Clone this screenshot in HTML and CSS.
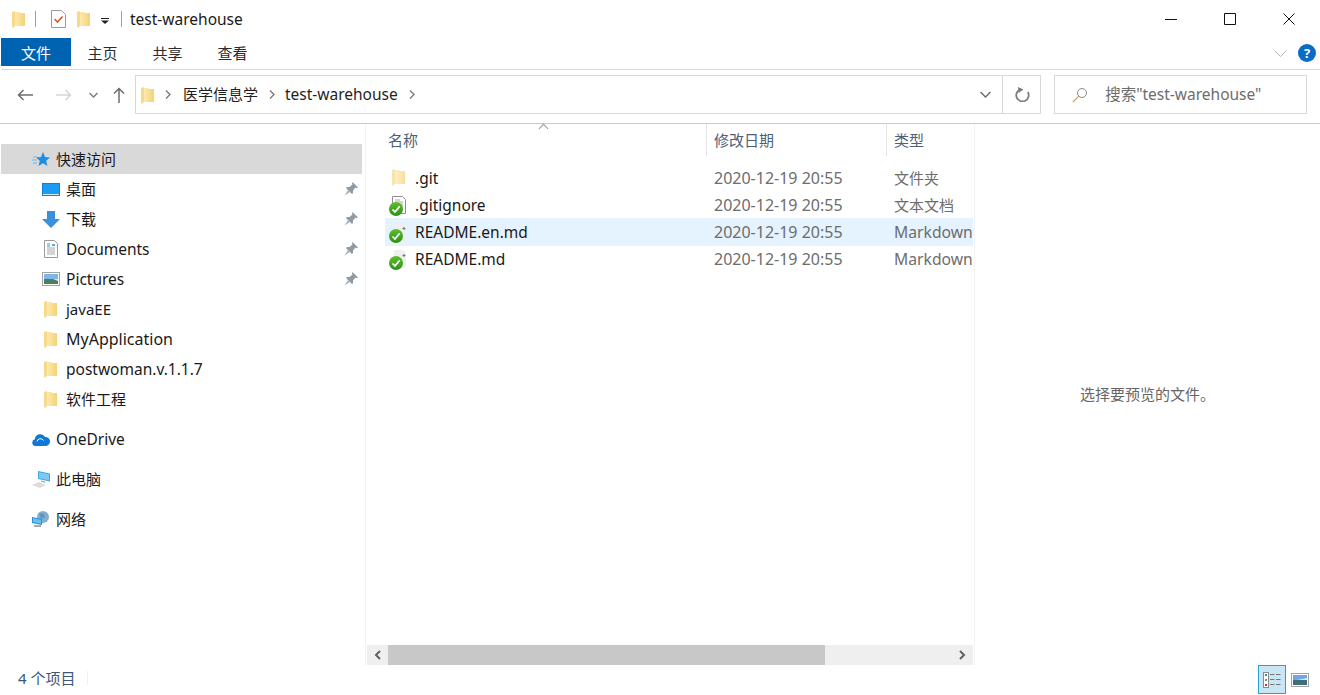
FILE: index.html
```html
<!DOCTYPE html>
<html lang="zh-CN">
  <head>
    <meta charset="UTF-8" />
    <title>test-warehouse</title>
    <link rel="stylesheet" href="styles.css">
  </head>
  <body>
    <svg class="sprites" width="0" height="0">
      <defs>
        <linearGradient id="folderBody" x1="0" y1="0" x2="1" y2="0">
          <stop offset="0" stop-color="#fdeab0" />
          <stop offset="1" stop-color="#f5d273" />
        </linearGradient>
        <linearGradient id="okFill" x1="0" y1="0" x2="0" y2="1">
          <stop offset="0" stop-color="#5cc02c" />
          <stop offset="1" stop-color="#2f8f18" />
        </linearGradient>
        <symbol id="folder" viewBox="0 0 13 17">
          <path d="M3 1h4l1 1h5v13H3z" fill="url(#folderBody)" />
          <path d="M0 1l3-1v15l-1 .5V17l-2-1z" fill="#f6d98c" />
        </symbol>
        <symbol id="pin" viewBox="0 0 14 14">
          <path d="M8.500 0L14 5.500l-1.500.7-1-.7L9 8.500V11l-1 1-6-6 1-1h2.500l3-2.500-.5-1z" fill="#8f9aa3" />
          <path d="M4 8L.5 13.500 6 10z" fill="#a9b2b9" />
        </symbol>
        <symbol id="okbadge" viewBox="0 0 14 14">
          <circle cx="7" cy="7" r="7" fill="url(#okFill)" />
          <path d="M3.500 7.500l2.500 2.500 4.700-5.800" fill="none" stroke="#fff" stroke-width="1.700" />
        </symbol>
        <symbol id="mdpage" viewBox="0 0 14 18">
          <path d="M2 0h9l3 3v15H2z" fill="#efefef" />
          <path d="M10.500 5.500h3M12 4v3" stroke="#777" />
        </symbol>
      </defs>
    </svg>

    <div class="window">
      <header class="titlebar">
        <svg class="ic-folder" width="13" height="17"><use href="#folder" /></svg>
        <span class="qa-sep"></span>
        <svg class="ic-props" width="15" height="18" viewBox="0 0 15 18">
          <path d="M.5.5h10l4 4v13H.5z" fill="#fff" stroke="#9a9a9a" />
          <path d="M3.500 9l3 3 5-5.500" fill="none" stroke="#e8541e" stroke-width="1.600" />
        </svg>
        <svg class="ic-folder-2" width="13" height="17"><use href="#folder" /></svg>
        <svg class="ic-qa-menu" width="8" height="6" viewBox="0 0 8 6">
          <path d="M0 0h8v1H0z" fill="#222" />
          <path d="M0 2.500h8L4 6z" fill="#222" />
        </svg>
        <span class="qa-sep qa-sep-2"></span>
        <span class="title-text">test-warehouse</span>
        <div class="win-controls">
          <svg width="12" height="12" viewBox="0 0 12 12"><path d="M0 6.500h12" stroke="#111" /></svg>
          <svg width="12" height="12" viewBox="0 0 12 12"><path d="M.5.500h11v11H.5z" fill="none" stroke="#111" /></svg>
          <svg width="12" height="12" viewBox="0 0 12 12"><path d="M.5.500l11 11M11.500.500l-11 11" stroke="#111" /></svg>
        </div>
      </header>

      <nav class="ribbon">
        <a class="tab tab-file">文件</a>
        <a class="tab">主页</a>
        <a class="tab">共享</a>
        <a class="tab">查看</a>
        <svg class="ribbon-toggle" width="13" height="7" viewBox="0 0 13 7">
          <path d="M.5.500l6 6 6-6" fill="none" stroke="#b4b4b4" />
        </svg>
        <span class="help">?</span>
      </nav>

      <div class="navbar">
        <div class="nav-buttons">
          <svg class="nav-back" width="16" height="12" viewBox="0 0 16 12"><path d="M16 6H1.500M6.500 1l-5 5 5 5" fill="none" stroke="#6d6d6d" stroke-width="1.500" /></svg>
          <svg class="nav-forward" width="16" height="12" viewBox="0 0 16 12"><path d="M0 6h14.500M9.500 1l5 5-5 5" fill="none" stroke="#d6d6d6" stroke-width="1.500" /></svg>
          <svg class="nav-recent" width="9" height="6" viewBox="0 0 9 6"><path d="M.5 1l4 4 4-4" fill="none" stroke="#7f7f7f" stroke-width="1.500" /></svg>
          <svg class="nav-up" width="12" height="16" viewBox="0 0 12 16"><path d="M6 16V1.500M1 6.500l5-5 5 5" fill="none" stroke="#6d6d6d" stroke-width="1.500" /></svg>
        </div>
        <div class="address">
          <svg class="addr-folder" width="13" height="17"><use href="#folder" /></svg>
          <svg class="crumb-arrow" width="6" height="9" viewBox="0 0 6 9"><path d="M1 .5l4 4-4 4" fill="none" stroke="#777" stroke-width="1.300" /></svg>
          <span class="crumb">医学信息学</span>
          <svg class="crumb-arrow" width="6" height="9" viewBox="0 0 6 9"><path d="M1 .5l4 4-4 4" fill="none" stroke="#777" stroke-width="1.300" /></svg>
          <span class="crumb crumb-latin">test-warehouse</span>
          <svg class="crumb-arrow" width="6" height="9" viewBox="0 0 6 9"><path d="M1 .5l4 4-4 4" fill="none" stroke="#777" stroke-width="1.300" /></svg>
          <svg class="addr-drop" width="11" height="7" viewBox="0 0 11 7"><path d="M.5 1l5 5 5-5" fill="none" stroke="#6d6d6d" stroke-width="1.500" /></svg>
          <div class="addr-refresh">
            <svg width="15" height="15" viewBox="0 0 15 15">
              <path d="M12.800 5A6.200 6.200 0 1 1 5.500 2.300" fill="none" stroke="#7d7d7d" stroke-width="1.800" />
              <path d="M3 0l5.500 2.500L3.500 6z" fill="#7d7d7d" />
            </svg>
          </div>
        </div>
        <div class="search">
          <svg width="16" height="16" viewBox="0 0 16 16">
            <circle cx="10" cy="6" r="4.500" fill="none" stroke="#8a8a8a" />
            <path d="M6.800 9.200L.8 15.200" stroke="#c49a5c" stroke-width="1.200" />
          </svg>
          <span class="search-text">搜索"test-warehouse"</span>
        </div>
      </div>

      <main class="content">
        <aside class="sidebar">
          <div class="side-row top selected">
            <svg width="18" height="15" viewBox="0 0 18 15">
              <path d="M11 0l2 5 5 .4-3.800 3.300L15.400 14 11 11.200 6.500 14l1.300-5.300L4 5.400 9 5z" fill="#1f8fe6" />
              <path d="M1 5h4M0 8h5M1 11h4" stroke="#6fb6ea" />
            </svg>
            <span>快速访问</span>
          </div>
          <div class="side-row">
            <svg width="18" height="13" viewBox="0 0 18 13">
              <rect width="18" height="13" fill="#0f7fd6" />
              <rect x="1" y="1" width="16" height="10" fill="#1a9cf5" />
              <path d="M1 11h16v1H1z" fill="#d5ecfb" />
            </svg>
            <span>桌面</span>
            <svg class="pin" width="14" height="14"><use href="#pin" /></svg>
          </div>
          <div class="side-row">
            <svg width="18" height="17" viewBox="0 0 18 17"><path d="M5 0h8v8h5l-9 9-9-9h5z" fill="#3b8fdc" /></svg>
            <span>下载</span>
            <svg class="pin" width="14" height="14"><use href="#pin" /></svg>
          </div>
          <div class="side-row">
            <svg width="18" height="18" viewBox="0 0 18 18">
              <path d="M2.500.5h10l3 3v14h-13z" fill="#fff" stroke="#9a9a9a" />
              <path d="M5 4h3M5 6h3" stroke="#3a97d8" />
              <path d="M5 8h8M5 10h8M5 12h8M5 14h8" stroke="#a9a9a9" />
              <path d="M10 4h3v2h-3z" fill="#6aa8d8" />
            </svg>
            <span class="latin">Documents</span>
            <svg class="pin" width="14" height="14"><use href="#pin" /></svg>
          </div>
          <div class="side-row">
            <svg width="18" height="14" viewBox="0 0 18 14">
              <rect x=".5" y=".5" width="17" height="13" fill="#fff" stroke="#a3a3a3" />
              <rect x="2" y="2" width="14" height="5" fill="#7db6e8" />
              <rect x="2" y="7" width="14" height="5" fill="#4f7d63" />
              <path d="M2 7h9l5 2v-2z" fill="#d9e6ee" />
            </svg>
            <span class="latin">Pictures</span>
            <svg class="pin" width="14" height="14"><use href="#pin" /></svg>
          </div>
          <div class="side-row">
            <svg class="side-folder" width="13" height="17"><use href="#folder" /></svg>
            <span>javaEE</span>
          </div>
          <div class="side-row">
            <svg class="side-folder" width="13" height="17"><use href="#folder" /></svg>
            <span class="latin-wide">MyApplication</span>
          </div>
          <div class="side-row">
            <svg class="side-folder" width="13" height="17"><use href="#folder" /></svg>
            <span class="latin">postwoman.v.1.1.7</span>
          </div>
          <div class="side-row">
            <svg class="side-folder" width="13" height="17"><use href="#folder" /></svg>
            <span>软件工程</span>
          </div>
          <div class="side-row top group">
            <svg width="18" height="13" viewBox="0 0 18 13">
              <path d="M3.500 13a3.400 3.400 0 0 1-.6-6.700A5.400 5.400 0 0 1 13 4a4.500 4.500 0 0 1 1 9z" fill="#0f78d4" />
              <path d="M5 8.500a3.500 3.500 0 0 1 6.500-1" fill="none" stroke="#fff" />
            </svg>
            <span class="latin">OneDrive</span>
          </div>
          <div class="side-row top group">
            <svg width="18" height="17" viewBox="0 0 18 17">
              <path d="M6 0l12 2.500v8L6 8z" fill="#3ea7e6" />
              <path d="M7 1.300l10 2v6L7 7.300z" fill="#7ccaf3" />
              <path d="M0 14l7-3 7 3-6 3z" fill="#dcdcdc" />
              <path d="M9 9.500l4 .8v1.500L9 11z" fill="#aeb7bd" />
            </svg>
            <span>此电脑</span>
          </div>
          <div class="side-row top group">
            <svg width="18" height="17" viewBox="0 0 18 17">
              <circle cx="11" cy="6" r="6" fill="#7fb0cf" />
              <path d="M7 2l5 1 1 3-4 2z" fill="#5e97bb" />
              <path d="M0 6l10 2v6L0 12z" fill="#2a8fd8" />
              <path d="M1 7.200l8 1.600v4L1 11z" fill="#69c0f0" />
              <path d="M2 14h7v2H2z" fill="#a3adb3" />
            </svg>
            <span>网络</span>
          </div>
        </aside>

        <section class="files">
          <div class="file-head">
            <span class="sort-mark"></span>
            <div class="col-name">名称</div>
            <div class="col-date">修改日期</div>
            <div class="col-type">类型</div>
          </div>
          <div class="file-list">
            <div class="file-row">
              <div class="col-name">
                <svg class="git-folder" width="13" height="17"><use href="#folder" /></svg>
                <span>.git</span>
              </div>
              <div class="col-date">2020-12-19 20:55</div>
              <div class="col-type">文件夹</div>
            </div>
            <div class="file-row">
              <div class="col-name">
                <span class="file-icon">
                  <svg width="14" height="18" viewBox="0 0 14 18">
                    <path d="M.5.500h10l3 3v14H.5z" fill="#fff" stroke="#8e8e8e" />
                    <path d="M3 4h5M3 6h8M3 8h8M3 10h8M3 12h8M3 14h8" stroke="#a9a9a9" />
                  </svg>
                  <svg class="badge" width="14" height="14"><use href="#okbadge" /></svg>
                </span>
                <span>.gitignore</span>
              </div>
              <div class="col-date">2020-12-19 20:55</div>
              <div class="col-type">文本文档</div>
            </div>
            <div class="file-row selected">
              <div class="col-name">
                <span class="file-icon">
                  <svg width="14" height="18"><use href="#mdpage" /></svg>
                  <svg class="badge" width="14" height="14"><use href="#okbadge" /></svg>
                </span>
                <span>README.en.md</span>
              </div>
              <div class="col-date">2020-12-19 20:55</div>
              <div class="col-type latin-type">Markdown</div>
            </div>
            <div class="file-row">
              <div class="col-name">
                <span class="file-icon">
                  <svg width="14" height="18"><use href="#mdpage" /></svg>
                  <svg class="badge" width="14" height="14"><use href="#okbadge" /></svg>
                </span>
                <span>README.md</span>
              </div>
              <div class="col-date">2020-12-19 20:55</div>
              <div class="col-type latin-type">Markdown</div>
            </div>
          </div>
          <div class="hscroll">
            <span class="hs-btn">
              <svg width="7" height="10" viewBox="0 0 7 10"><path d="M6 1L2 5l4 4" fill="none" stroke="#606060" stroke-width="2" /></svg>
            </span>
            <span class="hs-thumb"></span>
            <span class="hs-btn hs-right">
              <svg width="7" height="10" viewBox="0 0 7 10"><path d="M1 1l4 4-4 4" fill="none" stroke="#606060" stroke-width="2" /></svg>
            </span>
          </div>
        </section>

        <section class="preview">选择要预览的文件。</section>
      </main>

      <footer class="status">
        <span class="count">4 个项目</span>
        <div class="view-buttons">
          <span class="view-btn active">
            <svg width="18" height="16" viewBox="0 0 18 16">
              <rect x=".5" y=".5" width="5" height="15" fill="#fff" stroke="#8c8c8c" />
              <path d="M2 2h2v2H2z" fill="#3d8a9e" /><path d="M2 7h2v2H2z" fill="#7d9a3d" /><path d="M2 12h2v2H2z" fill="#c8361e" />
              <path d="M7 2.500h4.500M13 2.500h4.500M7 7.500h4.500M13 7.500h4.500M7 12.500h4.500M13 12.500h4.500" stroke="#777" />
            </svg>
          </span>
          <svg class="view-large" width="18" height="14" viewBox="0 0 18 14">
            <rect x=".5" y=".5" width="17" height="13" fill="#fff" stroke="#a3a3a3" />
            <rect x="2" y="2" width="14" height="5" fill="#6fa8e6" />
            <rect x="2" y="7" width="14" height="5" fill="#3e6f78" />
            <path d="M6 7h10V5z" fill="#dbe8f2" />
          </svg>
        </div>
      </footer>
    </div>
  </body>
</html>
```

FILE: styles.css
```css
/* Global styles */
* {
  margin: 0;
  padding: 0;
  box-sizing: border-box;
}

body {
  background: #ffffff;
  color: #1a1a1a;
  font-family: "Noto Sans", "Noto Sans CJK SC", sans-serif;
  font-size: 15px;
  line-height: 20px;
  overflow: hidden;
}

svg {
  display: block;
  flex: none;
}

.sprites {
  position: absolute;
}

.window {
  width: 1320px;
  height: 695px;
  display: flex;
  flex-direction: column;
  overflow: hidden;
}

/* Title bar */
.titlebar {
  height: 38px;
  display: flex;
  align-items: center;
  padding-left: 12px;
}

.qa-sep {
  width: 1px;
  height: 16px;
  background: #a0a0a0;
  margin-left: 10px;
}

.ic-props {
  margin-left: 15px;
}

.ic-folder-2 {
  margin-left: 11px;
}

.ic-qa-menu {
  margin-left: 11px;
  margin-top: 3px;
}

.qa-sep-2 {
  margin-left: 12px;
}

.title-text {
  margin-left: 8px;
  font-size: 15.5px;
  line-height: 38px;
}

.win-controls {
  margin-left: auto;
  display: flex;
  gap: 47px;
  padding-right: 25px;
}

/* Ribbon tabs */
.ribbon {
  height: 32px;
  margin-left: 1px;
  display: flex;
  align-items: flex-start;
  border-bottom: 1px solid #d9d9d9;
}

.tab {
  width: 65px;
  height: 28px;
  line-height: 30px;
  text-align: center;
  color: #2b2b2b;
}

.tab-file {
  width: 70px;
  margin-right: -1px;
  background: #0063b1;
  color: #ffffff;
}

.ribbon-toggle {
  margin-left: auto;
  margin-top: 12px;
}

.help {
  width: 18px;
  height: 18px;
  margin: 6px 4px 0 11px;
  border-radius: 50%;
  background: #0a6cc4;
  color: #ffffff;
  font-size: 13px;
  font-weight: bold;
  line-height: 18px;
  text-align: center;
}

/* Address row */
.navbar {
  height: 54px;
  padding: 5px 13px 0 0;
  display: flex;
  border-bottom: 1px solid #c9c9c9;
}

.nav-buttons {
  width: 135px;
  height: 39px;
  display: flex;
  align-items: center;
  padding-left: 17px;
}

.nav-forward {
  margin-left: 23px;
}

.nav-recent {
  margin-left: 17px;
}

.nav-up {
  margin-left: 15px;
}

.address {
  width: 907px;
  height: 39px;
  border: 1px solid #d9d9d9;
  display: flex;
  align-items: center;
  padding-left: 5px;
}

.addr-folder {
  margin-top: 1px;
}

.crumb-arrow {
  margin: 0 12px 0 11px;
}

.crumb {
  padding-bottom: 2px;
  color: #1f1f1f;
}

.crumb-latin {
  font-size: 15.5px;
  margin-left: -2px;
}

.addr-drop {
  margin-left: auto;
  margin-right: 11px;
}

.addr-refresh {
  width: 38px;
  height: 37px;
  padding-left: 2px;
  border-left: 1px solid #d9d9d9;
  display: flex;
  align-items: center;
  justify-content: center;
}

.search {
  width: 253px;
  height: 39px;
  margin-left: 13px;
  border: 1px solid #d9d9d9;
  display: flex;
  align-items: center;
  gap: 17px;
  padding-left: 17px;
  color: #6d6d6d;
  font-size: 15.5px;
}

.search-text {
  padding-bottom: 2px;
}

/* Main area */
.content {
  flex: 1;
  display: flex;
  min-height: 0;
}

.sidebar {
  width: 361px;
  margin-left: 1px;
  padding-top: 20px;
}

.side-row {
  height: 30px;
  padding-left: 41px;
  display: flex;
  align-items: center;
  gap: 6px;
  color: #1a1a1a;
}

.side-row.top {
  padding-left: 31px;
  gap: 6px;
}

.side-row.group {
  margin-top: 10px;
}

.side-row.selected {
  background: #d9d9d9;
}

.latin {
  font-size: 15.5px;
}

.latin-wide {
  font-size: 16px;
}

.side-folder {
  margin-left: 2px;
  margin-right: 3px;
}

.pin {
  margin-left: auto;
  margin-right: 4px;
}

/* File list */
.files {
  width: 610px;
  margin-left: 3px;
  border-left: 1px solid #f2f2f2;
  border-right: 1px solid #f2f2f2;
  display: flex;
  flex-direction: column;
  position: relative;
}

.file-head,
.file-row {
  display: grid;
  grid-template-columns: 321px 180px 87px;
  margin-left: 19px;
  width: 588px;
}

.file-head {
  height: 32px;
  color: #4c607a;
  line-height: 32px;
}

.file-head .col-name {
  padding-left: 3px;
}

.file-head .col-date,
.file-head .col-type {
  border-left: 1px solid #e5e5e5;
  padding-left: 7px;
}

.sort-mark {
  position: absolute;
  left: 174px;
  top: 1px;
  width: 7px;
  height: 7px;
  border-left: 1px solid #9a9a9a;
  border-top: 1px solid #9a9a9a;
  transform: rotate(45deg);
}

.file-list {
  flex: 1;
  padding-top: 8px;
}

.file-row {
  height: 27px;
  align-items: center;
  white-space: nowrap;
}

.file-row.selected {
  background: #e5f3ff;
  box-shadow: 0 1px 0 #e5f3ff;
}

.file-row .col-name {
  display: flex;
  align-items: center;
  padding-left: 3px;
  gap: 9px;
  color: #1a1a1a;
  font-size: 15.5px;
}

.file-row .col-date,
.file-row .col-type {
  padding-left: 8px;
  color: #6d6d6d;
}

.file-row .col-date {
  font-size: 16px;
}

.file-row .latin-type {
  font-size: 15.7px;
}

.git-folder {
  margin-left: 4px;
  margin-right: 1px;
  opacity: 0.7;
}

.file-icon {
  width: 18px;
  height: 18px;
  position: relative;
  display: block;
  padding-left: 4px;
}

.badge {
  position: absolute;
  left: 1px;
  bottom: -2px;
}

.hscroll {
  height: 20px;
  margin-left: 1px;
  margin-right: 1px;
  background: #efefef;
  display: flex;
}

.hs-btn {
  width: 21px;
  display: flex;
  align-items: center;
  justify-content: center;
}

.hs-thumb {
  width: 437px;
  background: #c8c8c8;
}

.hs-right {
  margin-left: auto;
}

/* Preview pane */
.preview {
  flex: 1;
  display: flex;
  align-items: center;
  justify-content: center;
  padding-bottom: 2px;
  color: #666666;
}

/* Status bar */
.status {
  height: 30px;
  display: flex;
  align-items: center;
  padding-left: 18px;
}

.count {
  height: 14px;
  line-height: 14px;
  padding-right: 12px;
  border-right: 1px solid #f0f0f0;
  color: #3d5878;
  margin-top: -4px;
}

.view-buttons {
  margin-left: auto;
  display: flex;
  align-items: center;
  gap: 5px;
  padding-right: 11px;
  margin-top: -1px;
}

.view-btn {
  width: 28px;
  height: 29px;
  background: #c9e6f5;
  border: 1px solid #26a0da;
  display: flex;
  align-items: center;
  justify-content: center;
}
```
